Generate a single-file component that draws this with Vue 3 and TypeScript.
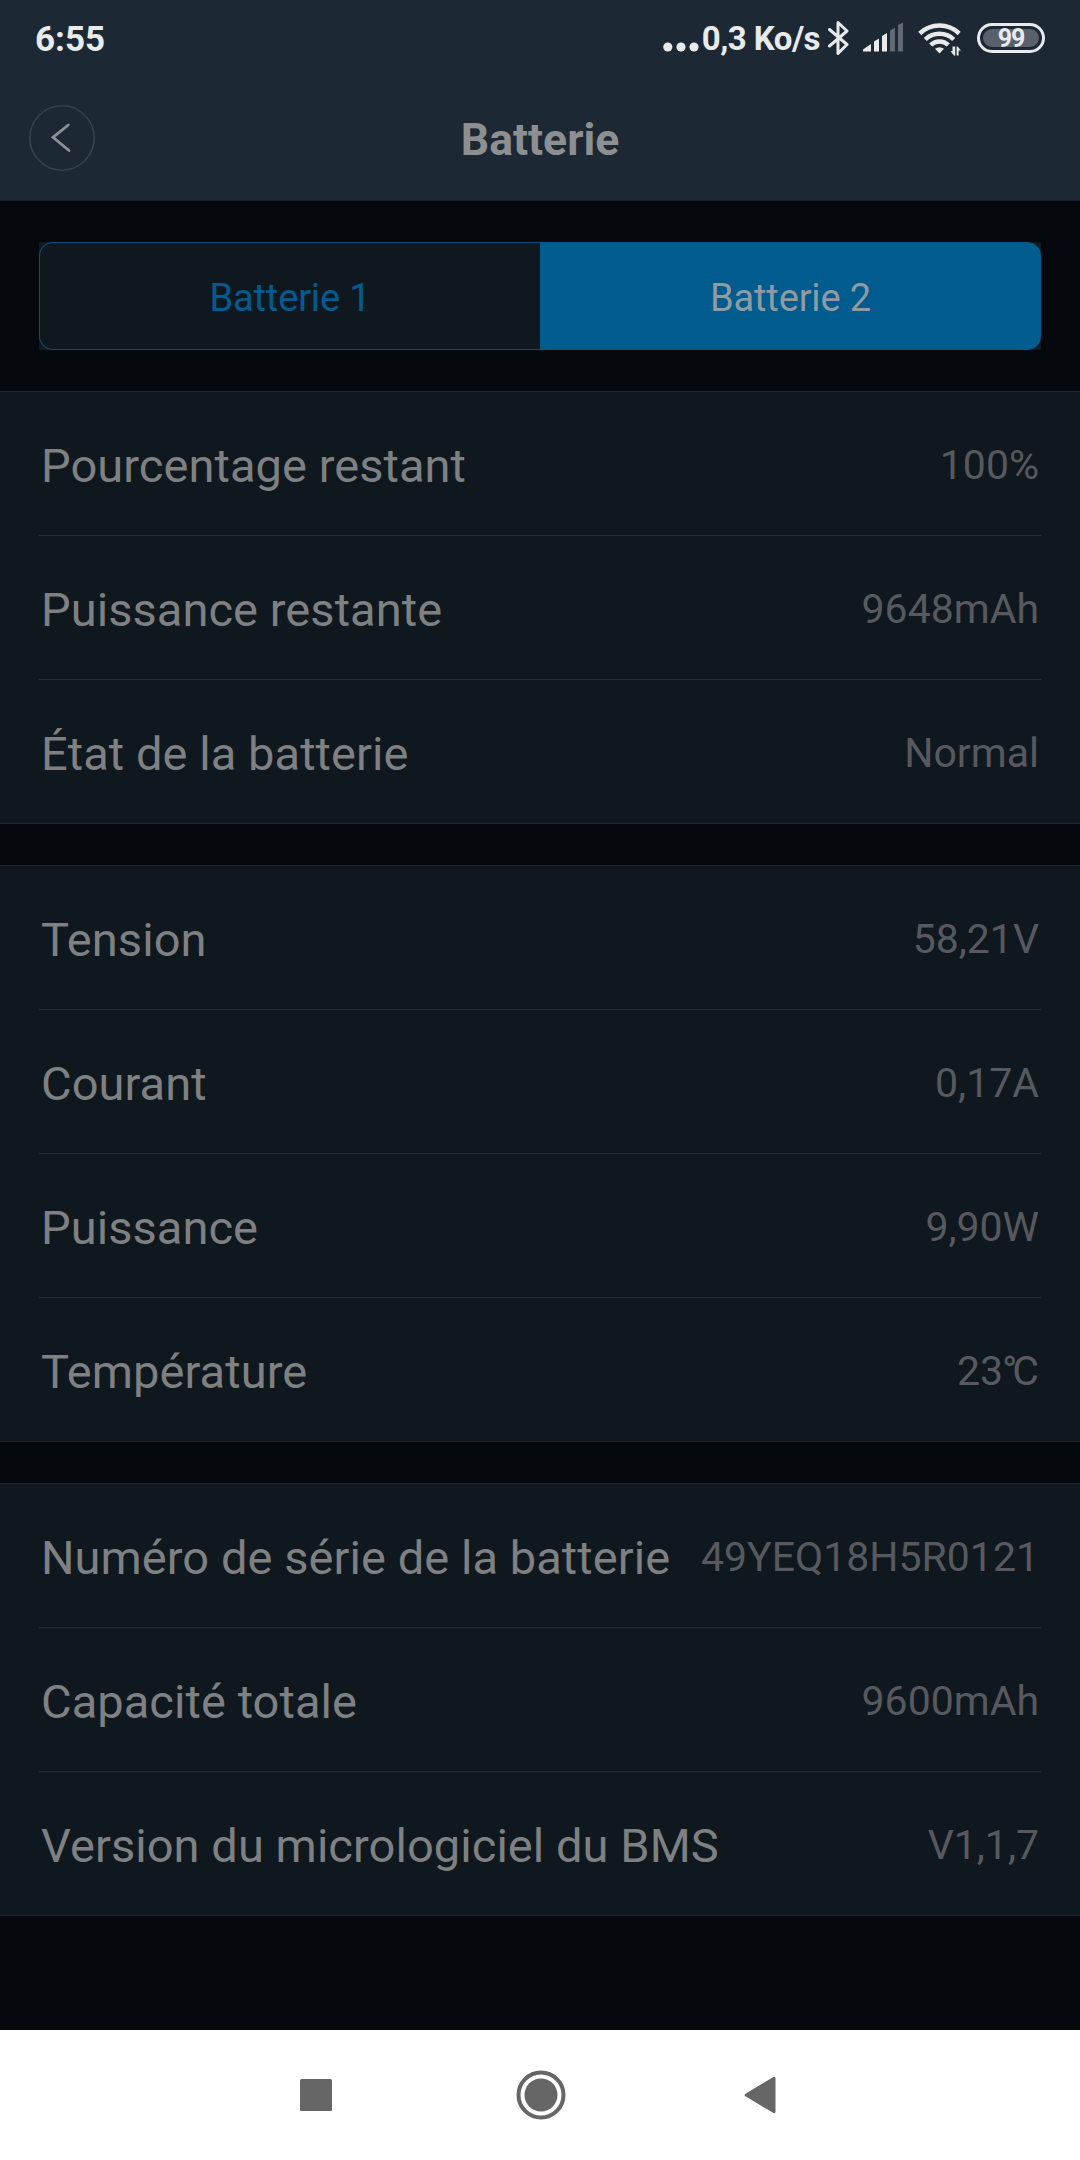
<script setup lang="ts">
interface Row {
  label: string
  value: string
  celsius?: boolean
}

const tabs: string[] = ['Batterie 1', 'Batterie 2']
const activeTab = 1

const groups: Row[][] = [
  [
    { label: 'Pourcentage restant', value: '100%' },
    { label: 'Puissance restante', value: '9648mAh' },
    { label: 'État de la batterie', value: 'Normal' },
  ],
  [
    { label: 'Tension', value: '58,21V' },
    { label: 'Courant', value: '0,17A' },
    { label: 'Puissance', value: '9,90W' },
    { label: 'Température', value: '23', celsius: true },
  ],
  [
    { label: 'Numéro de série de la batterie', value: '49YEQ18H5R0121' },
    { label: 'Capacité totale', value: '9600mAh' },
    { label: 'Version du micrologiciel du BMS', value: 'V1,1,7' },
  ],
]
</script>

<template>
  <div class="screen">
    <header class="top">
      <div class="status">
        <span class="clock">6:55</span>
        <div class="indicators">
          <svg class="dots" width="36" height="10" viewBox="0 0 36 10">
            <circle cx="4.8" cy="5" r="4.6" />
            <circle cx="18" cy="5" r="4.6" />
            <circle cx="31" cy="5" r="4.6" />
          </svg>
          <span class="speed">0,3 Ko/s</span>
          <svg class="bluetooth" width="22" height="36" viewBox="0 0 22 36">
            <path d="M1.5 9.5 L19 24.5 L10 33.5 V2.500 L19 11 L1.5 26" />
          </svg>
          <svg class="signal" width="41" height="30" viewBox="0 0 41 30">
            <path d="M0 29.5V27.500L8 22V29.500Z" />
            <path d="M11 29.500V19.500L16 16.500V29.500Z" />
            <path d="M19 29.500V14L24 11V29.500Z" />
            <path class="dim" d="M27 29.500V8.500L32 5.500V29.500Z" />
            <path class="dim" d="M35 29.500V3L40 .5V29.500Z" />
          </svg>
          <svg class="wifi" width="44" height="36" viewBox="0 0 44 36">
            <path class="arc" d="M1.800 12.500A28.500 28.500 0 0 1 41.200 12.500" />
            <path class="arc" d="M7.300 18.500A20.500 20.500 0 0 1 35.700 18.500" />
            <path class="arc" d="M12.700 24A12.500 12.500 0 0 1 30.300 24" />
            <path d="M17 27.800Q21.500 24.500 26 27.800L21.500 32.500Z" />
            <path d="M34.500 25.500V30L32.500 30.300L36 34.500H37.200V25.500Z" />
            <path d="M38.600 34.500V25.500H39.600L43 29.500H40.600V34.500Z" />
          </svg>
          <div class="battery"><div class="level">99</div></div>
        </div>
      </div>
      <div class="titlebar">
        <button class="back" type="button" aria-label="Retour">
          <svg width="66" height="66" viewBox="0 0 66 66">
            <circle cx="33" cy="33" r="32.200" />
            <path d="M39.300 20L24 32.300L40 45.500" />
          </svg>
        </button>
        <h1>Batterie</h1>
      </div>
    </header>

    <main>
      <div class="tabs">
        <div class="segmented">
          <div
            v-for="(tab, i) in tabs"
            :key="tab"
            class="tab"
            :class="{ active: i === activeTab }"
          >
            {{ tab }}
          </div>
        </div>
      </div>

      <section v-for="(rows, g) in groups" :key="g" class="group">
        <div v-for="row in rows" :key="row.label" class="row">
          <span class="label">{{ row.label }}</span>
          <span class="value">{{ row.value }}<template v-if="row.celsius"><span class="degree">°</span>C</template></span>
        </div>
      </section>
    </main>

    <nav class="navbar">
      <svg width="32" height="32" viewBox="0 0 32 32">
        <rect width="32" height="32" rx="1.500" />
      </svg>
      <svg class="home" width="50" height="50" viewBox="0 0 50 50">
        <circle class="ring" cx="25" cy="25" r="22.500" />
        <circle cx="25" cy="25" r="16.500" />
      </svg>
      <svg width="32" height="38" viewBox="0 0 32 38">
        <path d="M29 1.200Q31.500 0 31.500 2.500V35.500Q31.500 38 29 36.800L1.500 20.300Q-.4 19 1.500 17.700Z" />
      </svg>
    </nav>
  </div>
</template>

<style>
body {
  margin: 0;
  background: #05090d;
}
</style>

<style scoped>
.screen {
  display: flex;
  flex-direction: column;
  width: 1080px;
  height: 2160px;
  overflow: hidden;
  background: #05090d;
  font-family: Roboto, sans-serif;
}

svg {
  display: block;
  flex: none;
}

.top {
  box-sizing: border-box;
  height: 201px;
  background: #1c2834;
  border-bottom: 1px solid #18212a;
}

.status {
  display: flex;
  justify-content: space-between;
  height: 78px;
  padding: 0 35px;
  color: #e8eaec;
}

.clock {
  font-size: 35px;
  font-weight: 700;
  line-height: 80px;
}

.indicators {
  display: flex;
  align-items: flex-start;
}

.indicators svg {
  fill: #e8eaec;
}

.dots {
  margin: 42px 3px 0 0;
}

.speed {
  font-size: 33px;
  font-weight: 700;
  letter-spacing: -0.55px;
  line-height: 78px;
  white-space: pre;
}

.bluetooth {
  margin: 20px 0 0 8px;
}

.indicators .bluetooth path {
  fill: none;
  stroke: #e8eaec;
  stroke-width: 3;
  stroke-linejoin: round;
  stroke-linecap: round;
}

.signal {
  margin: 22px 0 0 13px;
}

.signal .dim {
  fill: #616973;
}

.wifi {
  margin: 21px 0 0 14px;
}

.wifi .arc {
  fill: none;
  stroke: #e8eaec;
  stroke-width: 4.500;
}

.battery {
  box-sizing: border-box;
  width: 68px;
  height: 30px;
  margin: 23px 0 0 15px;
  padding: 3px;
  border: 3px solid #e8eaec;
  border-radius: 15px;
}

.level {
  height: 18px;
  border-radius: 9px;
  background: #58616c;
  font-size: 25px;
  font-weight: 700;
  letter-spacing: -1px;
  line-height: 20px;
  text-align: center;
}

.titlebar {
  display: grid;
  grid-template-columns: 95px 1fr 95px;
  align-items: center;
  height: 122px;
}

.back {
  width: 66px;
  height: 66px;
  margin: -2px 0 0 29px;
  padding: 0;
  border: 0;
  background: none;
}

.back circle {
  fill: none;
  stroke: #36424e;
  stroke-width: 1.600;
}

.back path {
  fill: none;
  stroke: #8e9194;
  stroke-width: 2.800;
  stroke-linecap: round;
}

h1 {
  margin: 2px 0 0;
  color: #8d8f91;
  font-size: 44.5px;
  font-weight: 700;
  line-height: 52px;
  text-align: center;
}

main {
  flex: 1;
}

.tabs {
  padding: 41px 39px;
}

.segmented {
  display: flex;
  height: 108px;
  background: #10181f;
}

.tab {
  box-sizing: border-box;
  width: 50%;
  border: 1px solid #0c4f7d;
  border-right: 0;
  border-radius: 14px 0 0 14px;
  color: #025b90;
  font-size: 38px;
  letter-spacing: -0.15px;
  line-height: 110px;
  text-align: center;
}

.tab.active {
  border: 0;
  border-radius: 0 14px 14px 0;
  background: #005b8f;
  color: #8f9aa1;
  line-height: 112px;
}

.group {
  margin-bottom: 41px;
  border: solid #1f2529;
  border-width: 1px 0;
  background: #10181f;
}

.row {
  display: flex;
  align-items: center;
  justify-content: space-between;
  height: 143px;
  margin: 0 39px;
  padding: 0 2px;
}

.row + .row {
  border-top: 1px solid #262e35;
}

.label {
  color: #7f8081;
  font-size: 47px;
  letter-spacing: 0.06px;
  line-height: 56px;
  padding-top: 4px;
}

.value {
  color: #57595e;
  font-size: 41px;
  line-height: 50px;
  padding-top: 3px;
}

.degree {
  margin-left: -1px;
  letter-spacing: -5px;
}

.navbar {
  box-sizing: border-box;
  display: flex;
  align-items: center;
  justify-content: space-between;
  height: 130px;
  padding: 0 304px 0 300px;
  background: #fff;
}

.navbar svg {
  fill: #666;
}

.navbar .home {
  margin-left: 5px;
}

.navbar .ring {
  fill: none;
  stroke: #666;
  stroke-width: 4;
}
</style>
